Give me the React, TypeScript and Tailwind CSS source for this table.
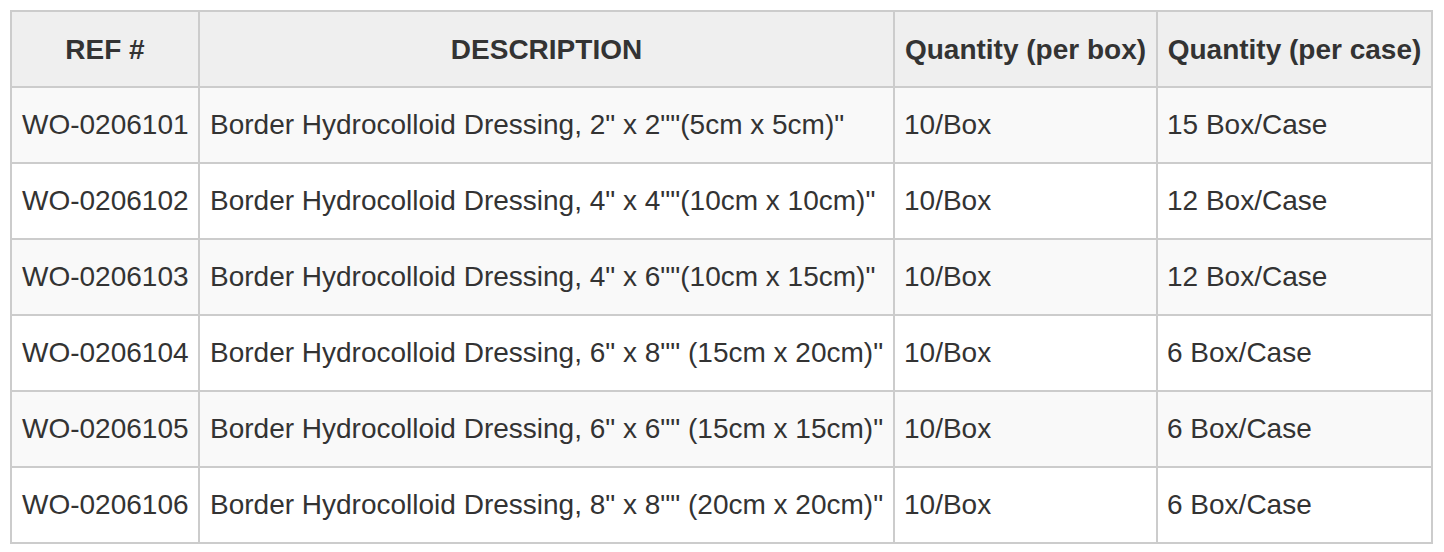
import React from "react"

interface Product {
  ref: string
  description: string
  perBox: string
  perCase: string
}

const products: Product[] = [
  { ref: "WO-0206101", description: 'Border Hydrocolloid Dressing, 2" x 2""(5cm x 5cm)"', perBox: "10/Box", perCase: "15 Box/Case" },
  { ref: "WO-0206102", description: 'Border Hydrocolloid Dressing, 4" x 4""(10cm x 10cm)"', perBox: "10/Box", perCase: "12 Box/Case" },
  { ref: "WO-0206103", description: 'Border Hydrocolloid Dressing, 4" x 6""(10cm x 15cm)"', perBox: "10/Box", perCase: "12 Box/Case" },
  { ref: "WO-0206104", description: 'Border Hydrocolloid Dressing, 6" x 8"" (15cm x 20cm)"', perBox: "10/Box", perCase: "6 Box/Case" },
  { ref: "WO-0206105", description: 'Border Hydrocolloid Dressing, 6" x 6"" (15cm x 15cm)"', perBox: "10/Box", perCase: "6 Box/Case" },
  { ref: "WO-0206106", description: 'Border Hydrocolloid Dressing, 8" x 8"" (20cm x 20cm)"', perBox: "10/Box", perCase: "6 Box/Case" },
]

const headers = ["REF #", "DESCRIPTION", "Quantity (per box)", "Quantity (per case)"]

export default function App() {
  return (
    <div className="bg-white w-[1444px] h-[552px] p-[10px] font-['Liberation_Sans',Arial,sans-serif] text-[#333] text-[28px] leading-none">
      <div
        role="table"
        className="grid grid-cols-[186px_693px_261px_273px] auto-rows-[74px] gap-[2px] p-[2px] bg-[#ccc] w-[1423px]"
      >
        {headers.map((h) => (
          <div key={h} role="columnheader" className="bg-[#efefef] flex items-center justify-center pt-px font-bold whitespace-nowrap">
            {h}
          </div>
        ))}
        {products.map((p, i) => {
          const bg = i % 2 === 0 ? "bg-[#f9f9f9]" : "bg-white"
          return (
            <React.Fragment key={p.ref}>
              <div role="cell" className={`${bg} flex items-center pl-[10px] whitespace-nowrap`}>{p.ref}</div>
              <div role="cell" className={`${bg} flex items-center pl-[10px] whitespace-nowrap`}>{p.description}</div>
              <div role="cell" className={`${bg} flex items-center pl-[9px] whitespace-nowrap`}>{p.perBox}</div>
              <div role="cell" className={`${bg} flex items-center pl-[9px] whitespace-nowrap`}>{p.perCase}</div>
            </React.Fragment>
          )
        })}
      </div>
    </div>
  )
}
